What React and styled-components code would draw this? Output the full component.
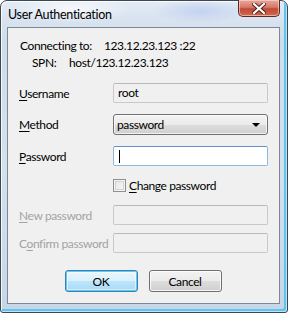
import React from 'react';
import styled, { createGlobalStyle } from 'styled-components';

const Global = createGlobalStyle`
  html, body { margin: 0; padding: 0; background: #ffffff; }
  body { font-family: Lato, "Segoe UI", sans-serif; font-size: 12px; letter-spacing: -0.4px; color: #000; }
  * { box-sizing: border-box; }
`;

const Window = styled.div`
  width: 288px;
  height: 313px;
  border: 1px solid #3c4754;
  border-radius: 7px 7px 3px 3px;
  background:
    radial-gradient(ellipse 60px 14px at 70px 8px, rgba(255,255,255,0.7), rgba(255,255,255,0)),
    radial-gradient(ellipse 50px 12px at 200px 10px, rgba(170,190,240,0.5), rgba(170,190,240,0)),
    linear-gradient(180deg, #e3ebf5 0%, #cfdcea 12%, #d5e0ed 55%, #c6d5e7 100%);
  box-shadow: inset 1px 1px 0 rgba(255,255,255,0.8), inset -1px -1px 0 #bfe3f5, inset -3px -3px 0 #5cc6ee;
  display: flex;
  flex-direction: column;
`;

const TitleBar = styled.div`
  height: 26px;
  display: flex;
  justify-content: space-between;
  align-items: flex-start;
  padding-left: 7px;
  padding-right: 7px;
`;

const Title = styled.div`
  line-height: 27px;
  font-size: 12.5px;
  letter-spacing: -0.3px;
  color: #000;
`;

const CloseButton = styled.div`
  width: 42px;
  height: 17px;
  margin-top: -1px;
  border: 1px solid #5b2a24;
  border-top: none;
  border-radius: 0 0 5px 5px;
  background: linear-gradient(180deg, #e8a89c 0%, #d7796a 45%, #c04a36 55%, #cf6a4e 100%);
  box-shadow: inset 0 0 0 1px rgba(255,220,210,0.6);
  display: flex;
  align-items: center;
  justify-content: center;
`;

const Client = styled.div`
  flex: 1;
  margin: 0 7px 8px 6px;
  border: 1px solid #7c8896;
  background: #f0f0f0;
  padding: 9px 11px 0 11px;
  display: flex;
  flex-direction: column;
`;

const InfoLine = styled.div`
  display: grid;
  grid-template-columns: ${p => p.$labelWidth}px auto;
  padding-left: ${p => p.$indent}px;
  line-height: 17px;
  color: #000;
`;

const Row = styled.div`
  display: grid;
  grid-template-columns: 94px 155px;
  align-items: center;
  margin-top: ${p => p.$gap}px;
  min-height: ${p => p.$h || 20}px;
`;

const Label = styled.span`
  color: ${p => (p.$disabled ? '#a3a3a3' : '#000')};
  white-space: nowrap;
`;

const Key = styled.span`
  text-decoration: underline;
  text-underline-offset: 2px;
`;

const TextBox = styled.div`
  height: 20px;
  border: 1px solid ${p => (p.$focus ? '#8fb8de' : '#c9c9c9')};
  border-top-color: ${p => (p.$focus ? '#5d93c6' : '#b8b8b8')};
  border-radius: 2px;
  background: ${p => (p.$focus ? '#ffffff' : '#f0f0f0')};
  padding: 0 4px;
  display: flex;
  align-items: center;
  line-height: 18px;
`;

const Caret = styled.span`
  width: 1px;
  height: 13px;
  background: #000;
  margin-left: 1px;
`;

const Select = styled.div`
  height: 21px;
  border: 1px solid #707070;
  border-radius: 3px;
  background: linear-gradient(180deg, #f3f3f3 0%, #ebebeb 50%, #dddddd 51%, #cfcfcf 100%);
  box-shadow: inset 0 0 0 1px rgba(255,255,255,0.7);
  display: flex;
  align-items: center;
  justify-content: space-between;
  padding: 0 7px 0 3px;
`;

const Arrow = styled.span`
  width: 0;
  height: 0;
  border-left: 4px solid transparent;
  border-right: 4px solid transparent;
  border-top: 4px solid #000;
`;

const CheckRow = styled.label`
  display: flex;
  align-items: center;
  gap: 3px;
`;

const CheckBox = styled.span`
  width: 13px;
  height: 13px;
  border: 1px solid #8e8f8f;
  background: linear-gradient(135deg, #e6e6e6 0%, #f7f7f7 100%);
  box-shadow: inset 0 0 0 1px #f4f4f4, inset 0 0 0 2px #d2d2d2;
`;

const ButtonBar = styled.div`
  display: flex;
  justify-content: center;
  gap: 11px;
  margin-top: 17px;
  padding-right: 1px;
`;

const Button = styled.div`
  width: 73px;
  height: 22px;
  border-radius: 3px;
  border: 1px solid ${p => (p.$default ? '#3c7fb1' : '#707070')};
  background: ${p =>
    p.$default
      ? 'linear-gradient(180deg, #eaf6fd 0%, #d9f0fc 50%, #bee6fd 51%, #a7d9f5 100%)'
      : 'linear-gradient(180deg, #f2f2f2 0%, #ebebeb 50%, #dddddd 51%, #cfcfcf 100%)'};
  box-shadow: ${p =>
    p.$default ? 'inset 0 0 0 1px #5ccbf6, inset 0 0 0 2px rgba(255,255,255,0.5)' : 'inset 0 0 0 1px rgba(255,255,255,0.8)'};
  display: flex;
  align-items: center;
  justify-content: center;
  color: #000;
`;

export default function App() {
  return (
    <>
      <Global />
      <Window>
        <TitleBar>
          <Title>User Authentication</Title>
          <CloseButton>
            <svg width="14" height="11" viewBox="0 0 14 11">
              <path d="M2 1 L12 10 M12 1 L2 10" stroke="#4a1f19" strokeWidth="4" strokeLinecap="square" />
              <path d="M2 1 L12 10 M12 1 L2 10" stroke="#ffffff" strokeWidth="2.2" strokeLinecap="square" />
            </svg>
          </CloseButton>
        </TitleBar>
        <Client>
          <InfoLine $indent={1} $labelWidth={84}>
            <span>Connecting to:</span>
            <span>123.12.23.123 :22</span>
          </InfoLine>
          <InfoLine $indent={13} $labelWidth={37}>
            <span>SPN:</span>
            <span>host/123.12.23.123</span>
          </InfoLine>
          <Row $gap={12}>
            <Label><Key>U</Key>sername</Label>
            <TextBox>root</TextBox>
          </Row>
          <Row $gap={11}>
            <Label><Key>M</Key>ethod</Label>
            <Select>
              <span>password</span>
              <Arrow />
            </Select>
          </Row>
          <Row $gap={11}>
            <Label><Key>P</Key>assword</Label>
            <TextBox $focus><Caret /></TextBox>
          </Row>
          <Row $gap={12} $h={14}>
            <span />
            <CheckRow>
              <CheckBox />
              <Label><Key>C</Key>hange password</Label>
            </CheckRow>
          </Row>
          <Row $gap={12}>
            <Label $disabled><Key>N</Key>ew password</Label>
            <TextBox />
          </Row>
          <Row $gap={8}>
            <Label $disabled>C<Key>o</Key>nfirm password</Label>
            <TextBox />
          </Row>
          <ButtonBar>
            <Button $default>OK</Button>
            <Button>Cancel</Button>
          </ButtonBar>
        </Client>
      </Window>
    </>
  );
}
